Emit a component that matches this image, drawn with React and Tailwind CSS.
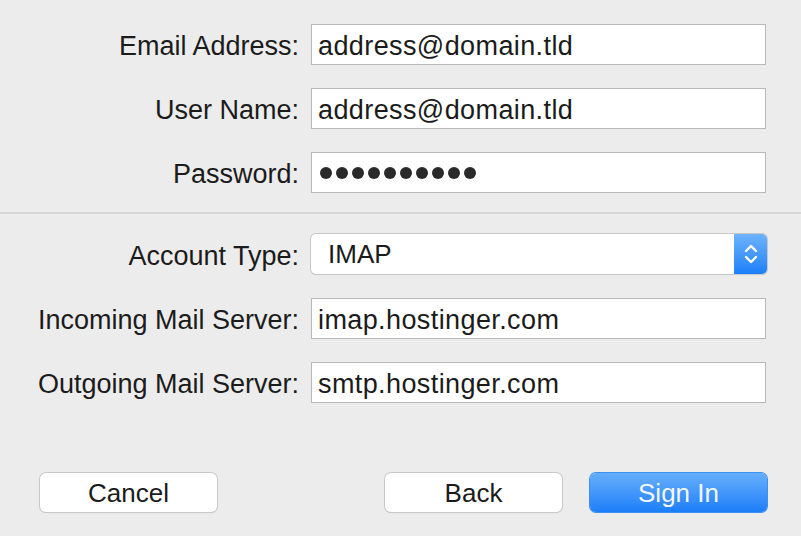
const font = { fontFamily: '"Liberation Sans", Arial, sans-serif' };

function Row({ label, children }) {
  return (
    <div className="flex items-center h-[41px]">
      <div className="w-[299px] shrink-0 pt-[4px] text-right text-[27px] text-[#1b1b1b] leading-none whitespace-nowrap">
        {label}
      </div>
      <div className="ml-[12px] w-[455px] h-full">{children}</div>
    </div>
  );
}

function Field({ value }) {
  return (
    <div className="h-full bg-white border border-[#b8b8b8] flex items-center pl-[6px] pt-[4px] text-[27px] tracking-[0.4px] text-[#1b1b1b] leading-none">
      {value}
    </div>
  );
}

function Dots({ count }) {
  return (
    <div className="h-full bg-white border border-[#b8b8b8] flex items-center pl-[8px] gap-[4px]">
      {Array.from({ length: count }).map((_, i) => (
        <span key={i} className="w-[12px] h-[12px] rounded-full bg-[#2a2a2a]" />
      ))}
    </div>
  );
}

function Select({ value }) {
  return (
    <div className="h-[40px] w-[456px] flex rounded-[5px] bg-white shadow-[0_0_0_1px_#c8c8c8,0_1px_1px_rgba(0,0,0,0.15)] overflow-hidden">
      <div className="flex-1 flex items-center pl-[17px] text-[26px] text-[#1b1b1b] leading-none">
        {value}
      </div>
      <div className="w-[33px] bg-gradient-to-b from-[#6cb3fb] to-[#1a7ffa] flex items-center justify-center">
        <svg width="14" height="24" viewBox="0 0 14 24" fill="none" stroke="white" strokeWidth="2.4" strokeLinecap="round" strokeLinejoin="round">
          <path d="M2 9 L7 4 L12 9" />
          <path d="M2 15 L7 20 L12 15" />
        </svg>
      </div>
    </div>
  );
}

function Button({ children, primary, className = "" }) {
  return (
    <button
      type="button"
      className={`h-[39px] w-[177px] rounded-[6px] text-[26px] leading-none flex items-center justify-center ${
        primary
          ? "bg-gradient-to-b from-[#65aefb] to-[#1a7ef9] text-[#f2f7ff] shadow-[0_0_0_1px_#3b8ff8]"
          : "bg-white text-[#1b1b1b] shadow-[0_0_0_1px_#c9c9c9,0_1px_1px_rgba(0,0,0,0.18)]"
      } ${className}`}
    >
      {children}
    </button>
  );
}

export default function App() {
  return (
    <div className="w-[801px] h-[536px] bg-[#ececec] overflow-hidden" style={font}>
      <div className="pt-[24px] flex flex-col gap-[23px]">
        <Row label="Email Address:">
          <Field value="address@domain.tld" />
        </Row>
        <Row label="User Name:">
          <Field value="address@domain.tld" />
        </Row>
        <Row label="Password:">
          <Dots count={10} />
        </Row>
      </div>

      <div className="mt-[19px] h-[2px] bg-[#d7d7d7]" />

      <div className="pt-[20px] flex flex-col gap-[23px]">
        <Row label="Account Type:">
          <Select value="IMAP" />
        </Row>
        <Row label="Incoming Mail Server:">
          <Field value="imap.hostinger.com" />
        </Row>
        <Row label="Outgoing Mail Server:">
          <Field value="smtp.hostinger.com" />
        </Row>
      </div>

      <div className="mt-[70px] flex items-center pl-[40px] pr-[34px]">
        <Button>Cancel</Button>
        <div className="flex-1" />
        <Button className="w-[176px]">Back</Button>
        <Button primary className="ml-[28px]">Sign In</Button>
      </div>
    </div>
  );
}
